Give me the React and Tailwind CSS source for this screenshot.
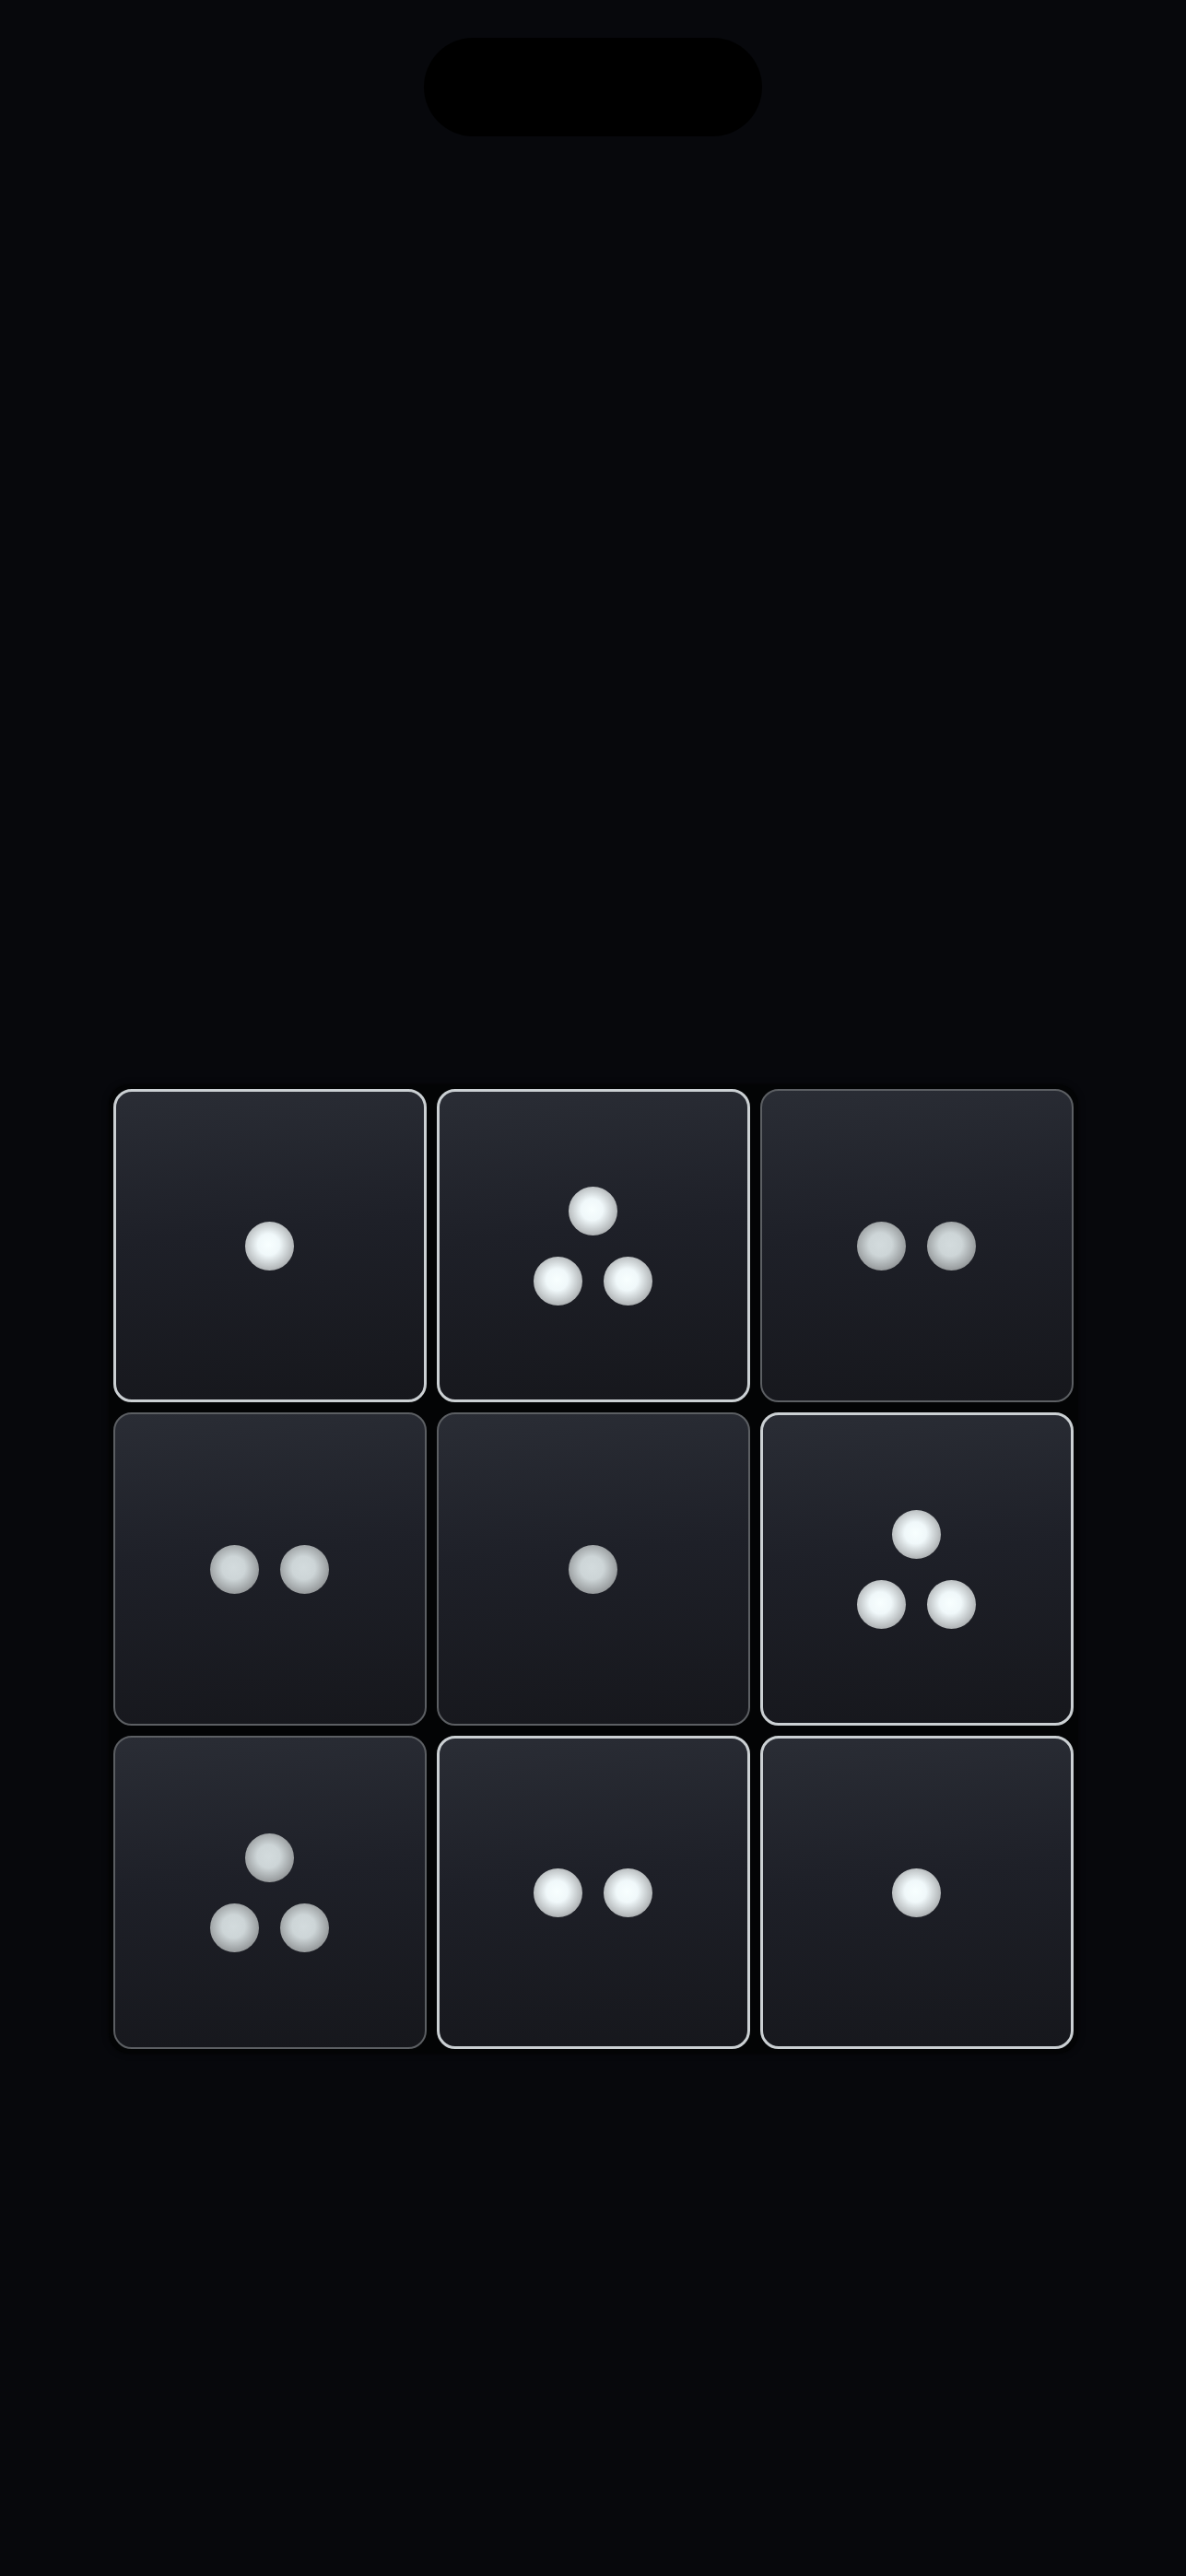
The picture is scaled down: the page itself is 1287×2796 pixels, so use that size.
import React from "react";

const cells = [
  { n: 1, on: true },
  { n: 3, on: true },
  { n: 2, on: false },
  { n: 2, on: false },
  { n: 1, on: false },
  { n: 3, on: true },
  { n: 3, on: false },
  { n: 2, on: true },
  { n: 1, on: true },
];

function Pip({ on }) {
  return (
    <div
      className={
        on
          ? "h-[53px] w-[53px] rounded-full bg-[radial-gradient(circle_at_48%_47%,#f8ffff_0%,#f0f8fa_30%,#b4b8ba_68%,#6a6c6e_100%)]"
          : "h-[53px] w-[53px] rounded-full bg-[radial-gradient(circle_at_48%_47%,#d3dbdd_0%,#cdd5d7_32%,#9a9ea0_68%,#5f6163_100%)]"
      }
    />
  );
}

function Pips({ n, on }) {
  if (n === 1) return <Pip on={on} />;
  if (n === 2)
    return (
      <div className="flex gap-[23px]">
        <Pip on={on} />
        <Pip on={on} />
      </div>
    );
  return (
    <div className="flex flex-col items-center gap-[23px]">
      <Pip on={on} />
      <div className="flex gap-[23px]">
        <Pip on={on} />
        <Pip on={on} />
      </div>
    </div>
  );
}

export default function App() {
  return (
    <div className="min-h-[2796px] w-full bg-[#07080c] pt-[41px]">
      <div className="mx-auto h-[107px] w-[367px] rounded-full bg-black" />
      <div className="mx-auto mt-[1029px] w-[1052px] rounded-[22px] bg-[#030405] p-[5px] shadow-[0_0_6px_rgba(0,0,0,0.6)]">
        <div className="grid grid-cols-3 gap-[11px]">
          {cells.map((c, i) => (
            <div
              key={i}
              className={
                c.on
                  ? "flex h-[340px] w-[340px] items-center justify-center rounded-[20px] border-[3px] border-[#cbd0d3] bg-[linear-gradient(175deg,#2a2d35_0%,#1e2028_45%,#16171c_100%)]"
                  : "flex h-[340px] w-[340px] items-center justify-center rounded-[20px] border-[2px] border-[#5c5f63] bg-[linear-gradient(175deg,#2a2d35_0%,#1e2028_45%,#16171c_100%)]"
              }
            >
              <Pips n={c.n} on={c.on} />
            </div>
          ))}
        </div>
      </div>
    </div>
  );
}
